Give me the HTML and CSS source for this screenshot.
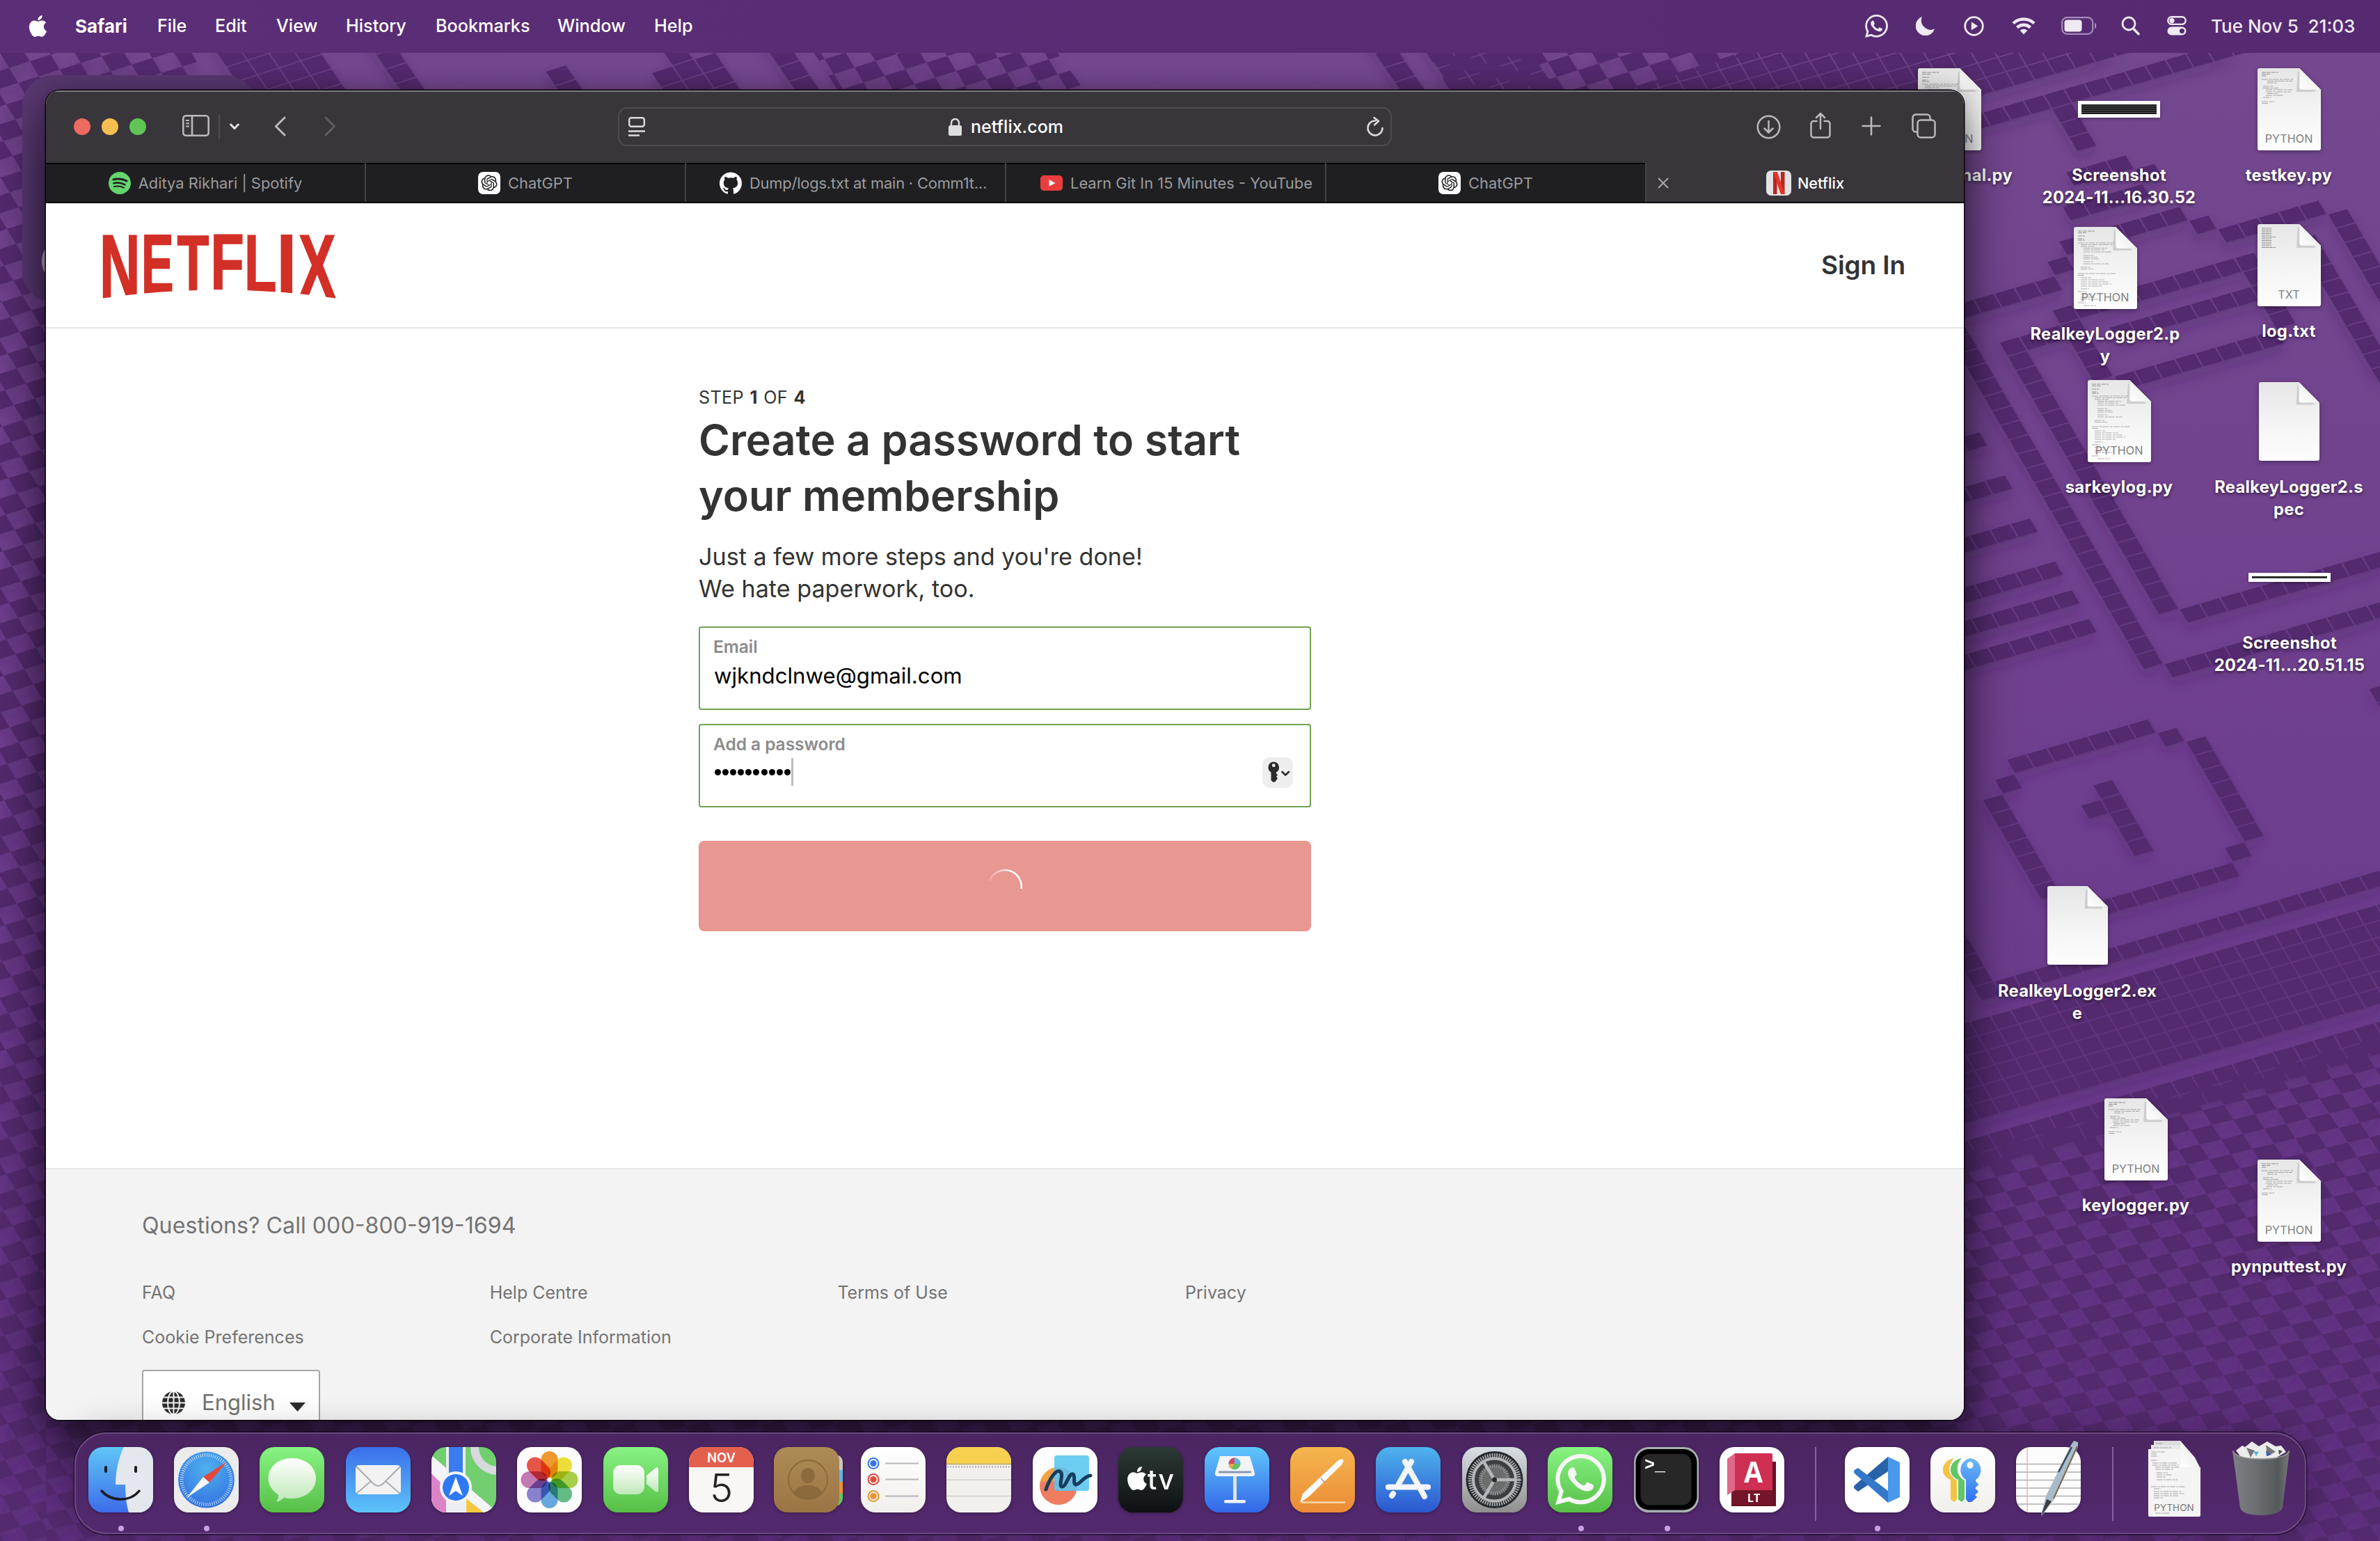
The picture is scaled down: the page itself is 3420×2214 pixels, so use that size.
FILE: index.html
```html
<!DOCTYPE html>
<html lang="en">
<head>
<meta charset="utf-8">
<title>Netflix</title>
<link rel="stylesheet" href="styles.css">
</head>
<body>

<!-- Shared symbols -->
<svg class="defs" width="0" height="0" aria-hidden="true">
  <defs>
    <linearGradient id="paper" x1="0" y1="0" x2="0" y2="1"><stop offset="0" stop-color="#e6e6e6"/><stop offset=".6" stop-color="#f6f6f6"/><stop offset="1" stop-color="#fdfdfd"/></linearGradient>
    <linearGradient id="fold" x1="0" y1="1" x2="1" y2="0"><stop offset="0" stop-color="#fff"/><stop offset=".5" stop-color="#f2f2f2"/><stop offset="1" stop-color="#c9c9c9"/></linearGradient>
    <linearGradient id="green" x1="0" y1="0" x2="0" y2="1"><stop offset="0" stop-color="#87f382"/><stop offset="1" stop-color="#57bf47"/></linearGradient>
    <linearGradient id="blue" x1="0" y1="0" x2="0" y2="1"><stop offset="0" stop-color="#3a6fea"/><stop offset="1" stop-color="#5cc4fa"/></linearGradient>
    <linearGradient id="blueDown" x1="0" y1="0" x2="0" y2="1"><stop offset="0" stop-color="#5fc6fb"/><stop offset="1" stop-color="#3366e8"/></linearGradient>
    <linearGradient id="white" x1="0" y1="0" x2="0" y2="1"><stop offset="0" stop-color="#fff"/><stop offset="1" stop-color="#f1efec"/></linearGradient>
    <linearGradient id="glass" x1="0" y1="0" x2="0" y2="1"><stop offset="0" stop-color="#fff"/><stop offset="1" stop-color="#bfe8b8"/></linearGradient>
    <clipPath id="tile93"><rect width="93" height="94" rx="21"/></clipPath>
  </defs>
  <symbol id="doc" viewBox="0 0 91 118">
    <path d="M3 0H60L91 31V115a3 3 0 0 1-3 3H3a3 3 0 0 1-3-3V3a3 3 0 0 1 3-3Z" fill="url(#paper)"/>
    <path d="M58 4L56 34H84Z" fill="#000" opacity=".13"/>
    <path d="M60 0L91 31H64a4 4 0 0 1-4-4Z" fill="url(#fold)" stroke="#d5d5d5" stroke-width=".6"/>
  </symbol>
  <symbol id="code-short" viewBox="0 0 91 118">
    <g stroke="#8f8f8f" stroke-width="1" fill="none"><path d="M6 6h24M6 8.500h12M6 11h6" stroke-dasharray="6 1"/><path d="M6 16h46M14 18.500h36M14 21h14M8 26h14M8 28.500h22M12 31h38M12 34h36M14 36.500h16M12 39h26M8 42h12M6 48h18M6 50.500h10" stroke-dasharray="9 1.500 4 1" opacity=".75"/></g>
  </symbol>
  <symbol id="code-long" viewBox="0 0 91 118">
    <g stroke="#8f8f8f" stroke-width="1" fill="none"><path d="M6 6h24M6 8.500h12M6 13h10M6 17h8M6 19h10" stroke-dasharray="6 1"/><path d="M6 23h52M10 25.500h46M10 28h20M14 30.500h34M14 33h30M14 36h40M14 41h14M14 43.500h20M14 46h22M14 50h14M14 53h36M10 58h14M10 60.500h18M6 67h54M6 69.500h10M10 73h16M10 76h34M10 79h40M10 82h44M10 85h30M10 89h12M6 93h12M10 97h16M10 101h20M10 104h26M6 109h12M14 113h18" stroke-dasharray="9 1.500 4 1" opacity=".7"/></g>
  </symbol>
  <symbol id="list-txt" viewBox="0 0 91 118">
    <path d="M6 6h14M6 8.500h14M6 11h14M6 13.500h14M6 16h14M6 18.500h20M6 21h14M6 23.500h14M6 26h14M6 28.500h14M6 31h14M6 33.500h20" stroke="#8f8f8f" stroke-width="1" stroke-dasharray="5 .6"/>
  </symbol>
  <symbol id="apple" viewBox="0 0 24 24">
    <path d="M12.152 6.896c-.948 0-2.415-1.078-3.96-1.04-2.04.027-3.91 1.183-4.961 3.014-2.117 3.675-.546 9.103 1.519 12.09 1.013 1.454 2.208 3.09 3.792 3.039 1.520-.065 2.090-.987 3.935-.987 1.831 0 2.350.987 3.960.948 1.637-.026 2.676-1.480 3.676-2.948 1.156-1.688 1.636-3.325 1.662-3.415-.039-.013-3.182-1.221-3.220-4.857-.026-3.040 2.480-4.494 2.597-4.559-1.429-2.090-3.623-2.324-4.390-2.376-2-.156-3.675 1.090-4.610 1.090zM15.530 3.830c.843-1.012 1.400-2.427 1.245-3.830-1.207.052-2.662.805-3.532 1.818-.780.896-1.454 2.338-1.273 3.714 1.338.104 2.715-.688 3.559-1.701"/>
  </symbol>
  <symbol id="whatsapp" viewBox="0 0 24 24">
    <path d="M17.472 14.382c-.297-.149-1.758-.867-2.030-.967-.273-.099-.471-.148-.670.150-.197.297-.767.966-.940 1.164-.173.199-.347.223-.644.075-.297-.150-1.255-.463-2.390-1.475-.883-.788-1.480-1.761-1.653-2.059-.173-.297-.018-.458.130-.606.134-.133.298-.347.446-.520.149-.174.198-.298.298-.497.099-.198.050-.371-.025-.520-.075-.149-.669-1.612-.916-2.207-.242-.579-.487-.500-.669-.510-.173-.008-.371-.010-.570-.010-.198 0-.520.074-.792.372-.272.297-1.040 1.016-1.040 2.479 0 1.462 1.065 2.875 1.213 3.074.149.198 2.096 3.200 5.077 4.487.709.306 1.262.489 1.694.625.712.227 1.360.195 1.871.118.571-.085 1.758-.719 2.006-1.413.248-.694.248-1.289.173-1.413-.074-.124-.272-.198-.570-.347m-5.421 7.403h-.004a9.870 9.870 0 0 1-5.031-1.378l-.361-.214-3.741.982.998-3.648-.235-.374a9.860 9.860 0 0 1-1.510-5.260c.001-5.450 4.436-9.884 9.888-9.884 2.640 0 5.122 1.030 6.988 2.898a9.825 9.825 0 0 1 2.893 6.994c-.003 5.450-4.437 9.884-9.885 9.884m8.413-18.297A11.815 11.815 0 0 0 12.050 0C5.495 0 .160 5.335.157 11.892c0 2.096.547 4.142 1.588 5.945L.057 24l6.305-1.654a11.882 11.882 0 0 0 5.683 1.448h.005c6.554 0 11.890-5.335 11.893-11.893a11.821 11.821 0 0 0-3.480-8.413z"/>
  </symbol>
  <symbol id="chatgpt" viewBox="0 0 32 32">
    <rect width="32" height="32" rx="7" fill="#fff"/>
    <path transform="translate(4.500 4.300) scale(.96)" fill="#1c1c1e" d="M22.2819 9.8211a5.9847 5.9847 0 0 0-.5157-4.9108 6.0462 6.0462 0 0 0-6.5098-2.9A6.0651 6.0651 0 0 0 4.9807 4.1818a5.9847 5.9847 0 0 0-3.9977 2.9 6.0462 6.0462 0 0 0 .7427 7.0966 5.98 5.98 0 0 0 .511 4.9107 6.051 6.051 0 0 0 6.5146 2.9001A5.9847 5.9847 0 0 0 13.2599 24a6.0557 6.0557 0 0 0 5.7718-4.2058 5.9894 5.9894 0 0 0 3.9977-2.9001 6.0557 6.0557 0 0 0-.7475-7.0729zm-9.022 12.6081a4.4755 4.4755 0 0 1-2.8764-1.0408l.1419-.0804 4.7783-2.7582a.7948.7948 0 0 0 .3927-.6813v-6.7369l2.02 1.1686a.071.071 0 0 1 .038.052v5.5826a4.504 4.504 0 0 1-4.4945 4.4944zm-9.6607-4.1254a4.4708 4.4708 0 0 1-.5346-3.0137l.142.0852 4.783 2.7582a.7712.7712 0 0 0 .7806 0l5.8428-3.3685v2.3324a.0804.0804 0 0 1-.0332.0615L9.74 19.9502a4.4992 4.4992 0 0 1-6.1408-1.6464zM2.3408 7.8956a4.485 4.485 0 0 1 2.3655-1.9728V11.6a.7664.7664 0 0 0 .3879.6765l5.8144 3.3543-2.0201 1.1685a.0757.0757 0 0 1-.071 0l-4.8303-2.7865A4.504 4.504 0 0 1 2.3408 7.872zm16.5963 3.8558L13.1038 8.364 15.1192 7.2a.0757.0757 0 0 1 .071 0l4.8303 2.7913a4.4944 4.4944 0 0 1-.6765 8.1042v-5.6772a.79.79 0 0 0-.407-.667zm2.0107-3.0231l-.142-.0852-4.7735-2.7818a.7759.7759 0 0 0-.7854 0L9.409 9.2297V6.8974a.0662.0662 0 0 1 .0284-.0615l4.8303-2.7866a4.4992 4.4992 0 0 1 6.6802 4.66zM8.3065 12.863l-2.02-1.1638a.0804.0804 0 0 1-.038-.0567V6.0742a4.4992 4.4992 0 0 1 7.3757-3.4537l-.142.0805L8.704 5.459a.7948.7948 0 0 0-.3927.6813zm1.0976-2.3654l2.602-1.4998 2.6069 1.4998v2.9994l-2.5974 1.4997-2.6067-1.4997Z"/>
  </symbol>
</svg>

<!-- Wallpaper -->
<svg class="wallpaper" width="3420" height="2214" viewBox="0 0 3420 2214" aria-hidden="true">
  <defs>
    <linearGradient id="sky" x1="0" y1="0" x2="0" y2="1"><stop offset="0" stop-color="#74498f"/><stop offset=".5" stop-color="#6f3f8f"/><stop offset="1" stop-color="#613383"/></linearGradient>
    <pattern id="unit" width="1" height="1" patternUnits="userSpaceOnUse"><rect width=".93" height=".93" fill="#53296e"/></pattern>
    <pattern id="checkR" width="2" height="2" patternUnits="userSpaceOnUse" patternTransform="matrix(31 -7.500 13.500 21 3132 875)"><path d="M0 0h1v1H0zM1 1h1v1H1z" fill="#53296e"/></pattern>
    <pattern id="checkL" width="2" height="2" patternUnits="userSpaceOnUse" patternTransform="matrix(30 -9.500 13 21.500 0 76)"><path d="M0 0h1v1H0zM1 1h1v1H1z" fill="#53296e"/></pattern>
    <filter id="lift" x="0" y="0" width="3420" height="2214" filterUnits="userSpaceOnUse"><feDropShadow dx="0" dy="10" stdDeviation="9" flood-color="#3f1a5c" flood-opacity=".3"/></filter>
    <clipPath id="farRight"><path d="M2500 76H3420V2214H2822V140H2300Z"/></clipPath>
  </defs>
  <rect width="3420" height="2214" fill="url(#sky)"/>
  <g filter="url(#lift)">
    <path d="M66 2040H2822V1655L3420 1490V2214H66Z" fill="url(#checkR)"/>
    <path d="M0 76H275L310 132H66V2214H0ZM1170 76H1520L1560 132H1205ZM2050 76H2520L2340 132H2085Z" fill="url(#checkL)"/>
    <g transform="matrix(31 -10 14.300 21 312 76)">
      <path d="M0 -1H4V14H0ZM6 -1H7V14H6ZM21 -1H22V30H21ZM44 10H45V40H44ZM46 10H50V40H46Z" fill="url(#unit)"/>
      <path d="M12 7h1v3h-1zM17 8h1v5h-1zM18 9h1v3h-1zM16 9h1v5h-1z" fill="url(#unit)"/>
    </g>
    <g clip-path="url(#farRight)">
      <g transform="matrix(29.200 -8.400 12.100 20.620 3132.500 875.500)" fill="url(#unit)">
        <path d="M-40 -56H40V-34H-40ZM0 -33H18V-32H0ZM7 -32H8V-29H7ZM6 -28H9V-27H6ZM5 -26H9V-25H5ZM9 -27H10V-26H9ZM4 -24H10V-23H4ZM10 -23H11V-22H10ZM11 -22H16V-21H11ZM16 -21H17V-4H16ZM3 -23H4V-22H3ZM-6 -22H3V-21H-6Z"/>
        <path d="M2 -20H12V-19H2ZM2 -19H3V-15H2ZM11 -19H12V-15H11ZM4 -18H11V-17H4ZM3 -15H11V-14H3ZM14 -20H15V-8H14ZM-1 -19H2V-18H-1ZM-1 -18H0V0H-1ZM0 0H14V1H0ZM-3 -22H-2V3H-3ZM-2 3H14V4H-2Z"/>
        <path d="M-14 -14H-4V-13H-14ZM-14 -11H-4V-10H-14ZM-14 -8H-4V-7H-14ZM-14 -5H-4V-4H-14ZM-16 -3H-4V-2H-16ZM-16 -1H-4V0H-16Z"/>
        <path d="M-11 6H-4V7H-11ZM-4 7H-3V8H-4ZM-3 8H-2V15H-3ZM-4 15H-3V16H-4ZM-11 16H-4V17H-11ZM-12 15H-11V16H-12ZM-13 8H-12V15H-13ZM-12 7H-11V8H-12Z"/>
        <path d="M-8 9H-7V14H-8ZM-9 10H-8V11H-9ZM6 8H7V14H6ZM-18 14H-17V20H-18ZM-17 19H10V20H-17ZM-24 21H12V27H-24ZM-24 28H12V30H-24Z"/>
      </g>
    </g>
  </g>
</svg>

<!-- Menu bar -->
<header class="menubar">
  <nav class="menus">
    <svg class="mb-apple" viewBox="1.500 0 21 24"><use href="#apple" width="24" height="24"/></svg>
    <span class="app">Safari</span><span>File</span><span>Edit</span><span>View</span><span>History</span><span>Bookmarks</span><span>Window</span><span>Help</span>
  </nav>
  <div class="status">
    <svg width="33" height="33" viewBox="0 0 24 24"><use href="#whatsapp"/></svg>
    <svg width="28" height="28" viewBox="0 0 28 28"><path d="M9 1A14 14 0 1 0 27 18.500 13.500 13.500 0 0 1 9 1Z"/></svg>
    <svg width="29" height="29" viewBox="0 0 29 29"><circle cx="14.500" cy="14.500" r="12.800" fill="none" stroke="#efe9f4" stroke-width="2.800"/><path d="M10.800 8.500v12l9.500-6z"/></svg>
    <svg width="34" height="26" viewBox="0 0 34 26"><g fill="none" stroke="#efe9f4" stroke-width="4.500"><path d="M2 9.500a21.500 21.500 0 0 1 30 0"/><path d="M7.500 15.500a14 14 0 0 1 19 0"/></g><path d="M17 25.500l-5.300-5.700a8 8 0 0 1 10.600 0z"/></svg>
    <svg width="52" height="26" viewBox="0 0 52 26"><rect x="1.200" y="1.200" width="44" height="23.600" rx="7" fill="none" stroke="#a58bba" stroke-width="2.200"/><rect x="4.500" y="4.500" width="25" height="17" rx="4"/><path d="M48 8.500c3 1 3 8 0 9z" fill="#a58bba"/></svg>
    <svg width="27" height="28" viewBox="0 0 27 28"><circle cx="11" cy="11" r="9" fill="none" stroke="#efe9f4" stroke-width="2.800"/><path d="M17.500 18l7.500 7.800" stroke="#efe9f4" stroke-width="3.400" stroke-linecap="round"/></svg>
    <svg width="28" height="28" viewBox="0 0 28 28"><rect x="1.300" y="1.300" width="25.400" height="10.600" rx="5.300" fill="none" stroke="#efe9f4" stroke-width="2.400"/><circle cx="7" cy="6.600" r="3.600"/><path d="M6.500 15.500h15a6 6 0 0 1 0 12h-15a6 6 0 0 1 0-12Zm15 2.600a3.500 3.500 0 1 0 0 7 3.500 3.500 0 0 0 0-7Z" fill-rule="evenodd"/></svg>
    <span class="clock">Tue Nov 5&nbsp; 21:03</span>
  </div>
</header>

<!-- Desktop -->
<main class="desktop">
  <div class="widget"><i class="widget-dial"></i><i class="widget-dot"></i></div>

  <div class="file edge" style="left:2711px;top:98px"><svg class="doc"><use href="#doc"/><use href="#code-long"/></svg><b class="kind">PYTHON</b><span class="name">nal.py</span></div>
  <div class="file" style="left:2945px;top:98px"><div class="shot shot-a"><i></i></div><span class="name">Screenshot<br>2024-11...16.30.52</span></div>
  <div class="file" style="left:3189px;top:98px"><svg class="doc"><use href="#doc"/><use href="#code-short"/></svg><b class="kind">PYTHON</b><span class="name">testkey.py</span></div>
  <div class="file" style="left:2925px;top:326px"><svg class="doc"><use href="#doc"/><use href="#code-long"/></svg><b class="kind">PYTHON</b><span class="name">RealkeyLogger2.p<br>y</span></div>
  <div class="file" style="left:3189px;top:322px"><svg class="doc"><use href="#doc"/><use href="#list-txt"/></svg><b class="kind">TXT</b><span class="name">log.txt</span></div>
  <div class="file" style="left:2945px;top:546px"><svg class="doc"><use href="#doc"/><use href="#code-long"/></svg><b class="kind">PYTHON</b><span class="name">sarkeylog.py</span></div>
  <div class="file" style="left:3189px;top:546px"><svg class="doc plain"><use href="#doc"/></svg><b class="kind"></b><span class="name">RealkeyLogger2.s<br>pec</span></div>
  <div class="file" style="left:3190px;top:770px"><div class="shot shot-b"><i></i></div><span class="name">Screenshot<br>2024-11...20.51.15</span></div>
  <div class="file" style="left:2885px;top:1270px"><svg class="doc plain"><use href="#doc"/></svg><b class="kind"></b><span class="name">RealkeyLogger2.ex<br>e</span></div>
  <div class="file" style="left:2969px;top:1578px"><svg class="doc"><use href="#doc"/><use href="#code-short"/></svg><b class="kind">PYTHON</b><span class="name">keylogger.py</span></div>
  <div class="file" style="left:3189px;top:1666px"><svg class="doc"><use href="#doc"/><use href="#code-short"/></svg><b class="kind">PYTHON</b><span class="name">pynputtest.py</span></div>

  <!-- Safari window -->
  <section class="window">
    <div class="toolbar">
      <i class="light red"></i><i class="light amber"></i><i class="light lime"></i>
      <svg class="t-side" width="39" height="31" viewBox="0 0 39 31"><g fill="none" stroke="#bbb9bd" stroke-width="2.600"><rect x="1.300" y="1.300" width="36.400" height="28.400" rx="4"/><path d="M14 1v29"/><path d="M5 8h5M5 12.300h5M5 16.600h5" stroke-width="2"/></g></svg>
      <i class="t-sep"></i>
      <svg class="t-chev" width="14" height="10" viewBox="0 0 14 10"><path d="M1.700 2l5.300 5.500L12.300 2" fill="none" stroke="#e6e5e7" stroke-width="3" stroke-linecap="round" stroke-linejoin="round"/></svg>
      <svg class="t-back" width="17" height="29" viewBox="0 0 17 29"><path d="M15 2L2.500 14.500 15 27" fill="none" stroke="#bbb9bd" stroke-width="3" stroke-linecap="round" stroke-linejoin="round"/></svg>
      <svg class="t-fwd" width="17" height="29" viewBox="0 0 17 29"><path d="M2 2l12.500 12.500L2 27" fill="none" stroke="#5f5d62" stroke-width="3" stroke-linecap="round" stroke-linejoin="round"/></svg>
      <div class="address">
        <svg width="24" height="28" viewBox="0 0 24 28"><g fill="none" stroke="#dddcde" stroke-width="2.400"><rect x="1.200" y="1.200" width="21.600" height="12.600" rx="3"/><path d="M0 20.500h24M0 26.500h16"/></g></svg>
        <div class="url"><svg width="19" height="26" viewBox="0 0 19 26"><rect y="11" width="19" height="15" rx="2.500" fill="#dddcde"/><path d="M4 12V7.500a5.500 5.500 0 0 1 11 0V12" fill="none" stroke="#dddcde" stroke-width="2.400"/></svg><span>netflix.com</span></div>
        <svg width="24" height="28" viewBox="0 0 24 28"><path d="M12.500 5.500A10.500 10.500 0 1 0 22.500 16" fill="none" stroke="#dddcde" stroke-width="2.500" stroke-linecap="round"/><path d="M10.500 1l6.500 5-6 5.500" fill="none" stroke="#dddcde" stroke-width="2.500" stroke-linecap="round" stroke-linejoin="round"/></svg>
      </div>
      <svg class="t-down" width="35" height="35" viewBox="0 0 35 35"><g fill="none" stroke="#bbb9bd" stroke-width="2.500" stroke-linecap="round" stroke-linejoin="round"><circle cx="17.500" cy="17.500" r="15.800"/><path d="M17.500 9v16M11.500 19.500l6 6 6-6"/></g></svg>
      <svg class="t-share" width="30" height="38" viewBox="0 0 30 38"><g fill="none" stroke="#bbb9bd" stroke-width="2.500" stroke-linecap="round" stroke-linejoin="round"><path d="M9.500 13H5a3.500 3.500 0 0 0-3.500 3.500V33A3.500 3.500 0 0 0 5 36.500h20a3.500 3.500 0 0 0 3.500-3.500V16.500A3.500 3.500 0 0 0 25 13h-4.500M15 24V2M9 8l6-6 6 6"/></g></svg>
      <svg class="t-plus" width="28" height="28" viewBox="0 0 28 28"><path d="M14 1.500v25M1.500 14h25" stroke="#bbb9bd" stroke-width="2.600" stroke-linecap="round"/></svg>
      <svg class="t-tabs" width="35" height="36" viewBox="0 0 35 36"><g fill="none" stroke="#bbb9bd" stroke-width="2.500"><rect x="8.500" y="9.500" width="25" height="25" rx="4.500"/><path d="M8 26.500H6A4.500 4.500 0 0 1 1.500 22V6A4.500 4.500 0 0 1 6 1.500h16A4.500 4.500 0 0 1 26.500 6v3"/></g></svg>
    </div>

    <div class="tabs">
      <div class="tab"><svg width="32" height="32" viewBox="0 0 32 32"><circle cx="16" cy="16" r="16" fill="#65d56e"/><g fill="none" stroke="#1f1f21" stroke-linecap="round"><path d="M7 11c6-1.600 13-1.200 19 2" stroke-width="3"/><path d="M7.500 16.300c5.500-1.400 11-.8 16 2" stroke-width="2.500"/><path d="M8 21c5-1.100 9.500-.7 14 1.800" stroke-width="2"/></g></svg><span>Aditya Rikhari | Spotify</span></div>
      <div class="tab"><svg width="32" height="32"><use href="#chatgpt"/></svg><span>ChatGPT</span></div>
      <div class="tab long tight"><svg width="32" height="32" viewBox="0 0 24 24"><path fill="#fff" d="M12 .297c-6.630 0-12 5.373-12 12 0 5.303 3.438 9.800 8.205 11.385.600.113.820-.258.820-.577 0-.285-.010-1.040-.015-2.040-3.338.724-4.042-1.610-4.042-1.610C4.422 18.070 3.633 17.700 3.633 17.700c-1.087-.744.084-.729.084-.729 1.205.084 1.838 1.236 1.838 1.236 1.070 1.835 2.809 1.305 3.495.998.108-.776.417-1.305.760-1.605-2.665-.300-5.466-1.332-5.466-5.930 0-1.310.465-2.380 1.235-3.220-.135-.303-.540-1.523.105-3.176 0 0 1.005-.322 3.300 1.230.960-.267 1.980-.399 3-.405 1.020.006 2.040.138 3 .405 2.280-1.552 3.285-1.230 3.285-1.230.645 1.653.240 2.873.120 3.176.765.840 1.230 1.910 1.230 3.220 0 4.610-2.805 5.625-5.475 5.920.420.360.810 1.096.810 2.220 0 1.606-.015 2.896-.015 3.286 0 .315.210.690.825.570C20.565 22.092 24 17.592 24 12.297c0-6.627-5.373-12-12-12"/></svg><span>Dump/logs.txt at main · Comm1t...</span></div>
      <div class="tab long"><svg width="32" height="32" viewBox="0 0 32 32"><rect y="5" width="32" height="22" rx="5" fill="#ea3d3d"/><path d="M12.500 11v10l9-5z" fill="#fff"/></svg><span>Learn Git In 15 Minutes - YouTube</span></div>
      <div class="tab"><svg width="32" height="32"><use href="#chatgpt"/></svg><span>ChatGPT</span></div>
      <div class="tab active">
        <svg class="close" width="16" height="16" viewBox="0 0 16 16"><path d="M1.500 1.500l13 13M14.500 1.500l-13 13" stroke="#a9a7ab" stroke-width="2" stroke-linecap="round"/></svg>
        <svg width="36" height="36" viewBox="0 0 36 36"><rect width="36" height="36" rx="7" fill="#e3e3e3"/><rect x="10" y="2" width="5.500" height="32" fill="#b5271e"/><rect x="21" y="2" width="5.500" height="32" fill="#b5271e"/><rect x="10" y="2" width="6" height="32" fill="#e0372b" transform="matrix(1 0 .34 1 -.7 0)"/></svg><span>Netflix</span>
      </div>
    </div>

    <div class="page">
      <div class="page-head">
        <svg class="logo" width="334" height="90" viewBox="0 0 334 90" role="img" aria-label="Netflix">
          <g font-family="'Liberation Sans', Arial, sans-serif" font-weight="700" font-size="100" fill="#d22f26" stroke="#d22f26" stroke-width="1.500">
            <text transform="matrix(.81 0 0 1.300 -5 90)">N</text>
            <text transform="matrix(.70 0 0 1.200 55 83)">E</text>
            <text transform="matrix(.75 0 0 1.150 106.500 79.500)">T</text>
            <text transform="matrix(.79 0 0 1.130 154.500 78)">F</text>
            <text transform="matrix(.76 0 0 1.170 203 81)">L</text>
            <text transform="matrix(1.030 0 0 1.200 249.500 83)">I</text>
            <text transform="matrix(.80 0 0 1.300 281 90)">X</text>
          </g>
          <path d="M-4 91Q167 66 338 91V98H-4Z" fill="#fff"/>
        </svg>
        <a class="signin">Sign In</a>
      </div>

      <form class="signup">
        <p class="step">STEP <b>1</b> OF <b>4</b></p>
        <h1>Create a password to start<br>your membership</h1>
        <p class="lead">Just a few more steps and you're done!<br>We hate paperwork, too.</p>
        <div class="field"><label>Email</label><span class="value">wjkndclnwe@gmail.com</span></div>
        <div class="field">
          <label>Add a password</label>
          <div class="secret"><i></i><i></i><i></i><i></i><i></i><i></i><i></i><i></i><i></i><i></i><u></u></div>
          <span class="keybtn"><svg width="44" height="44" viewBox="0 0 44 44"><path fill-rule="evenodd" d="M16 6.500a8 8 0 0 1 4 14.900v2.200l2 2-2 2.200 2 2.400-3.800 5.300h-3.200l-2.500-2.600V21.400A8 8 0 0 1 16 6.500Zm.2 2.800a2.400 2.400 0 1 0 0 4.800 2.400 2.400 0 0 0 0-4.800Z" fill="#2b2b2b"/><path d="M28.500 21l4.700 4.500 4.700-4.500" fill="none" stroke="#2b2b2b" stroke-width="2.600" stroke-linecap="round" stroke-linejoin="round"/></svg></span>
        </div>
        <div class="submit">
          <svg width="50" height="50" viewBox="0 0 50 50"><defs><linearGradient id="spin" x1="0" x2="1"><stop offset="0" stop-color="#fff" stop-opacity=".15"/><stop offset=".7" stop-color="#fff"/></linearGradient></defs><path d="M3 18A23.500 23.500 0 0 1 48.500 29" fill="none" stroke="url(#spin)" stroke-width="2.600"/></svg>
        </div>
      </form>

      <footer class="foot">
        <p class="call">Questions? Call 000-800-919-1694</p>
        <div class="links"><a>FAQ</a><a>Help Centre</a><a>Terms of Use</a><a>Privacy</a><a>Cookie Preferences</a><a>Corporate Information</a></div>
        <div class="lang">
          <svg width="33" height="33" viewBox="0 0 33 33"><circle cx="16.500" cy="16.500" r="16.500" fill="#2b2b2b"/><g fill="none" stroke="#f6f6f6" stroke-width="2"><ellipse cx="16.500" cy="16.500" rx="8.500" ry="16.500"/><path d="M16.500 0v33M0 16.500h33M2 8.500h29M2 24.500h29"/></g></svg>
          <span>English</span>
          <svg class="caret" width="23" height="13" viewBox="0 0 23 13"><path d="M0 0h23L11.500 13z" fill="#2b2b2b"/></svg>
        </div>
      </footer>
    </div>
  </section>
</main>

<!-- Dock -->
<div class="dock">
  <svg class="app-icon on" viewBox="0 0 93 94"><g clip-path="url(#tile93)"><rect width="93" height="94" fill="url(#finderL)"/><path d="M51 0C43 16 39 36 39 54H53C53 70 55 84 58 94H93V0Z" fill="#e4e8ee"/></g><defs><linearGradient id="finderL" x1="0" y1="0" x2="0" y2="1"><stop offset="0" stop-color="#5fc6f7"/><stop offset="1" stop-color="#3c6ce9"/></linearGradient></defs><g fill="none" stroke="#1d1d1f" stroke-width="4" stroke-linecap="round"><path d="M25 29v6M68 29v6"/><path d="M19 63C33 79 60 79 73 63" stroke-width="3.500"/></g></svg>
  <svg class="app-icon on" viewBox="0 0 93 94"><rect width="93" height="94" rx="21" fill="#ececec"/><circle cx="46.500" cy="47" r="40.500" fill="url(#saf)"/><defs><radialGradient id="saf" cx=".5" cy=".3" r=".8"><stop offset="0" stop-color="#4fb0ee"/><stop offset="1" stop-color="#2f6be0"/></radialGradient></defs><circle cx="46.500" cy="47" r="35.500" fill="none" stroke="#e6f1fb" stroke-width="5" stroke-dasharray="1 2.100" opacity=".85"/><path d="M76 21L51 51 42 43Z" fill="#e8483c"/><path d="M18 73L42 43 51 51Z" fill="#f4f6f8"/></svg>
  <svg class="app-icon" viewBox="0 0 93 94"><rect width="93" height="94" rx="21" fill="url(#green)"/><path d="M46.500 16C66 16 81 28.500 81 45S66 74 46.500 74c-4 0-8-.6-11.500-1.600C32 76 28 78 24 78.500c2.500-3 3.500-7 3-10C18 63 12.500 54 12.500 45 12.500 28.500 27 16 46.500 16Z" fill="url(#glass)"/></svg>
  <svg class="app-icon" viewBox="0 0 93 94"><rect width="93" height="94" rx="21" fill="url(#blue)"/><rect x="14" y="26" width="65" height="42" rx="5" fill="#f2f2f3"/><g fill="none" stroke="#a9adb3" stroke-width="2"><path d="M15 28L40 53q6.500 6 13 0L78 28"/><path d="M15 67L36 49M78 67L57 49"/></g></svg>
  <svg class="app-icon" viewBox="0 0 93 94"><g clip-path="url(#tile93)"><rect width="93" height="94" fill="#72cf70"/><path d="M0 12L93 92V94H0Z" fill="#f4f4f6"/><path d="M0 38L22 60V94H0Z" fill="#dc83c8"/><path d="M50 94V74L75 94Z" fill="#f3c83f"/><path d="M62 0a34 34 0 0 0 31 34" fill="none" stroke="#d7d9de" stroke-width="12"/><rect x="21" width="28" height="94" fill="#eceef2"/><rect x="25" width="20" height="60" fill="#3b7bf0"/></g><circle cx="35" cy="58" r="23" fill="#f4f4f8"/><circle cx="35" cy="58" r="19" fill="#2f78f3"/><path d="M35 43l10 27-10-7-10 7z" fill="#fff"/></svg>
  <svg class="app-icon" viewBox="0 0 93 94"><rect width="93" height="94" rx="21" fill="#fcfcfc"/><g class="petals"><g transform="translate(46.500 47)"><rect x="-12" y="-41" width="24" height="38" rx="12" fill="#f29a2e"/><rect x="-12" y="-41" width="24" height="38" rx="12" fill="#efe03a" transform="rotate(45)"/><rect x="-12" y="-41" width="24" height="38" rx="12" fill="#a9d04a" transform="rotate(90)"/><rect x="-12" y="-41" width="24" height="38" rx="12" fill="#63bd86" transform="rotate(135)"/><rect x="-12" y="-41" width="24" height="38" rx="12" fill="#69a9e0" transform="rotate(180)"/><rect x="-12" y="-41" width="24" height="38" rx="12" fill="#8a83cf" transform="rotate(225)"/><rect x="-12" y="-41" width="24" height="38" rx="12" fill="#c67bb4" transform="rotate(270)"/><rect x="-12" y="-41" width="24" height="38" rx="12" fill="#ea5649" transform="rotate(315)"/></g></g></svg>
  <svg class="app-icon" viewBox="0 0 93 94"><rect width="93" height="94" rx="21" fill="url(#green)"/><rect x="14" y="26" width="45" height="42" rx="11" fill="url(#glass)"/><path d="M62 41L75 30q4-2 4 2v30q0 4-4 2L62 53Z" fill="url(#glass)"/></svg>
  <svg class="app-icon" viewBox="0 0 93 94"><g clip-path="url(#tile93)"><rect width="93" height="94" fill="#f8f7f5"/><rect width="93" height="29" fill="#e3604f"/></g><text x="46.500" y="22" text-anchor="middle" font-family="Inter, sans-serif" font-weight="600" font-size="18.500" fill="#fff">NOV</text><text x="46.500" y="79" text-anchor="middle" font-family="Inter, sans-serif" font-weight="300" font-size="56" fill="#232323">5</text></svg>
  <svg class="app-icon" viewBox="0 0 93 94"><path d="M85 12h6q6 3 6 10v12H85z" fill="#c9c6c0"/><path d="M85 33h12v17H85z" fill="#62b6ea"/><path d="M85 50h12v17H85z" fill="#f0902f"/><path d="M85 67h12v8q-2 6-6 9h-6z" fill="#63c666"/><rect x="-2" width="94" height="94" rx="20" fill="url(#tan)"/><defs><linearGradient id="tan" x1="0" y1="0" x2="0" y2="1"><stop offset="0" stop-color="#ad8b56"/><stop offset="1" stop-color="#9c7444"/></linearGradient></defs><g fill="#8c6a3c"><circle cx="47" cy="47" r="28" fill="none" stroke="#8c6a3c" stroke-width="2"/><ellipse cx="47" cy="41" rx="10" ry="11"/><path d="M26 66a22 16 0 0 1 42 0 28 28 0 0 1-42 0Z"/></g></svg>
  <svg class="app-icon" viewBox="0 0 93 94"><rect width="93" height="94" rx="21" fill="url(#white)"/><path d="M35 23.500h48M35 46.500h48M35 70.500h48" stroke="#b4b6b8" stroke-width="2"/><g fill="none" stroke-width="2"><circle cx="18" cy="23.500" r="7.500" stroke="#3476f0"/><circle cx="18" cy="46.500" r="7.500" stroke="#e6483b"/><circle cx="18" cy="70.500" r="7.500" stroke="#e8942f"/></g><circle cx="18" cy="23.500" r="4.600" fill="#3476f0"/><circle cx="18" cy="46.500" r="4.600" fill="#e6483b"/><circle cx="18" cy="70.500" r="4.600" fill="#e8942f"/></svg>
  <svg class="app-icon" viewBox="0 0 93 94"><g clip-path="url(#tile93)"><rect width="93" height="94" fill="#f1f0ed"/><rect width="93" height="24" fill="#f7d04f"/><path d="M0 24.500h93" stroke="#b9a56a" stroke-width="1.500"/><path d="M1 28.500h93" stroke="#a9a8a5" stroke-width="2" stroke-dasharray="2 2"/><path d="M0 47h93M0 70.500h93" stroke="#d0cfcc" stroke-width="1.600"/></g></svg>
  <svg class="app-icon" viewBox="0 0 93 94"><rect width="93" height="94" rx="21" fill="#fdfdfd"/><circle cx="37" cy="56" r="27" fill="#ee7d60"/><path d="M11 50a27 27 0 0 1 26-21v20Z" fill="#f2a343"/><rect x="31" y="12" width="50" height="51" rx="4" fill="#59c5f0" opacity=".88"/><path d="M19 61C24 46 33 32 39 35c7 4-3 20 3 22 6 1 10-21 16-18 4 3-1 14 4 15 6 0 11-12 21-13" fill="none" stroke="#163c5e" stroke-width="5" stroke-linecap="round" stroke-linejoin="round"/></svg>
  <svg class="app-icon" viewBox="0 0 93 94"><rect width="93" height="94" rx="21" fill="url(#tvbg)"/><defs><linearGradient id="tvbg" x1="0" y1="0" x2="0" y2="1"><stop offset="0" stop-color="#2c3a35"/><stop offset="1" stop-color="#0e1012"/></linearGradient></defs><use href="#apple" x="10" y="28" width="34" height="34" fill="#fff"/><text x="42" y="61" font-family="Inter, sans-serif" font-weight="500" font-size="39" fill="#fff" textLength="38">tv</text></svg>
  <svg class="app-icon" viewBox="0 0 93 94"><rect width="93" height="94" rx="21" fill="url(#blueDown)"/><path d="M22 13h43l7 24q.5 5-4 5H19q-4.500 0-4-5Z" fill="#f2f4f6"/><path d="M20 36h47" stroke="#8a9aae" stroke-width="3"/><circle cx="43" cy="24" r="8.500" fill="#63bd6a"/><path d="M43 24V15.500a8.500 8.500 0 0 1 8.500 8.500Z" fill="#5eb5ea"/><path d="M43 24V15.500A8.500 8.500 0 0 0 34.500 24Z" fill="#d2486c"/><path d="M43 24h-8.500a8.500 8.500 0 0 0 4 7.200Z" fill="#f0a53c"/><rect x="41" y="42" width="5" height="35" fill="#dfe3e8"/><rect x="28" y="76" width="31" height="4.500" rx="2" fill="#f2f4f6"/></svg>
  <svg class="app-icon" viewBox="0 0 93 94"><rect width="93" height="94" rx="21" fill="url(#pg)"/><defs><linearGradient id="pg" x1="0" y1="0" x2="0" y2="1"><stop offset="0" stop-color="#f5b64d"/><stop offset="1" stop-color="#ec8b37"/></linearGradient></defs><path d="M16 79.500h63" stroke="#fbd9a8" stroke-width="2.500"/><path d="M14 80l4-13L67 21q6-5 8.500-3.500t-1.500 8L27 71Z" fill="#fafafa"/><path d="M44 45l6 6" stroke="#999" stroke-width="1.500"/></svg>
  <svg class="app-icon" viewBox="0 0 93 94"><rect width="93" height="94" rx="21" fill="url(#as)"/><defs><linearGradient id="as" x1="0" y1="0" x2="0" y2="1"><stop offset="0" stop-color="#4fb3ee"/><stop offset="1" stop-color="#2b57cf"/></linearGradient></defs><g stroke="#f3f6fa" stroke-width="8" stroke-linecap="round"><path d="M18 57.500h57"/><path d="M51 21L33 53M23 70l2-3"/><path d="M42 21L70 71"/></g></svg>
  <svg class="app-icon" viewBox="0 0 93 94"><rect width="93" height="94" rx="21" fill="url(#set)"/><defs><linearGradient id="set" x1="0" y1="0" x2="0" y2="1"><stop offset="0" stop-color="#d8dfe5"/><stop offset="1" stop-color="#908f8f"/></linearGradient></defs><circle cx="46.500" cy="47" r="41" fill="#26292b"/><circle cx="46.500" cy="47" r="34.500" fill="none" stroke="#a9adb0" stroke-width="7" stroke-dasharray="1.800 1.500"/><circle cx="46.500" cy="47" r="30.500" fill="#3c3f41" stroke="#b3b7ba" stroke-width="4"/><circle cx="46.500" cy="47" r="20" fill="#6b6c6c" stroke="#8d9092" stroke-width="5" stroke-dasharray="2 1.200"/><path d="M46.500 47H77M46.500 47L31 21M46.500 47L31 73" stroke="#b3b7ba" stroke-width="4.500"/><circle cx="46.500" cy="47" r="3.500" fill="#2b2b2b"/></svg>
  <svg class="app-icon on" viewBox="0 0 93 94"><rect width="93" height="94" rx="21" fill="url(#green)"/><use href="#whatsapp" x="11" y="10" width="73" height="73" fill="#f6f6f6"/></svg>
  <svg class="app-icon on" viewBox="0 0 93 94"><rect width="93" height="94" rx="21" fill="#a9aeb2"/><rect x="2.500" y="3" width="88" height="87.500" rx="19" fill="#000"/><rect x="9.500" y="10" width="73" height="73.500" rx="13" fill="#272728"/><text x="15" y="33" font-family="'Liberation Mono', monospace" font-weight="700" font-size="25" fill="#fff">&gt;_</text></svg>
  <svg class="app-icon" viewBox="0 0 93 94"><rect width="93" height="94" rx="21" fill="#fff"/><path d="M76 21h5v64H17V66z" fill="#6b1226"/><rect x="17" y="62" width="59" height="21" fill="#741529"/><path d="M11 17L22 9V62L11 69Z" fill="#e0688a"/><path d="M22 9H74q2 0 2 2V62H22Z" fill="#cf2f52"/><text x="48.500" y="51" text-anchor="middle" font-family="'Open Sans', sans-serif" font-weight="700" font-size="42" fill="#fff" textLength="27" lengthAdjust="spacingAndGlyphs">A</text><text x="49" y="79" text-anchor="middle" font-family="'Open Sans', sans-serif" font-weight="700" font-size="16" fill="#fff">LT</text></svg>
  <i class="dock-sep"></i>
  <svg class="app-icon on first" viewBox="0 0 93 94"><rect width="93" height="94" rx="21" fill="#fff"/><path d="M19 64l-5-4q-2-3 0-5L62 14v21Z" fill="#2862a8"/><path d="M14 38q-2-3 0-5l5-3 43 33v17Z" fill="#3478c9"/><path d="M62 14l17 8V72l-17 8Z" fill="#4a98ea"/></svg>
  <svg class="app-icon" viewBox="0 0 93 94"><rect width="93" height="94" rx="21" fill="url(#white)"/><g stroke="none"><path d="M34 16C14 20 13 41 29 47V75l5 4 4-4V48C23 40 26 24 34 16Z" fill="#f2c445"/><path d="M45 16C25 20 24 41 40 47V75l5 4 4-4V48C35 40 37 24 45 16Z" fill="#62c765"/><path fill-rule="evenodd" d="M57 16a17 17 0 0 1 8 31v2l4 5-5 5 5 5-5 5 3 3-8 7h-5l-3-4V47A17 17 0 0 1 57 16Zm0 5a4.500 5 0 1 0 0 10 4.500 5 0 0 0 0-10Z" fill="url(#keyb)"/></g><defs><linearGradient id="keyb" x1="0" y1="0" x2="0" y2="1"><stop offset="0" stop-color="#6bb9f4"/><stop offset="1" stop-color="#2f6ff5"/></linearGradient></defs></svg>
  <svg class="app-icon" viewBox="0 0 93 94"><rect width="93" height="94" rx="21" fill="#fcfcfc"/><path d="M0 24.500h93M0 36h93M0 47.500h93M0 59h93M0 70.500h93M3 82h87" stroke="#aeaeae" stroke-width="1.600"/><path d="M16 2v90" stroke="#f0b0ae" stroke-width="1.400"/><path d="M83 -9l6 2v7L54 76 37 99l-1-2L43 70 79 -3Z" fill="#a9bccc"/><path d="M80 0L61 36" stroke="#34485a" stroke-width="2.500"/><path d="M88 -1L54 74" stroke="#7d6a50" stroke-width="2"/><path d="M44 75l7 3-15 21z" fill="#3b3f44"/></svg>
  <i class="dock-sep"></i>
  <svg class="stack" viewBox="0 0 75 110"><path d="M8 0H46L66 38H8Z" fill="#dcdcdc"/><path d="M4 6H46L70 38H4Z" fill="#e8e8e8"/><path d="M0 12H46L48 38H75V107q0 2-2 2H2q-2 0-2-2Z" fill="#f4f4f4"/><path d="M46 0L67 24 74 38H50q-3 0-3-3Z" fill="url(#fold)"/><path d="M11 4h10M7 10h26M4 16h20M4 19h8M4 22h10M4 28h10M6 32h36M6 35h38M10 38h34M10 41h26M12 46h16M12 49h22M12 52h14M12 56h30M4 66h50M8 69h10M8 73h40M8 76h44M8 79h36M8 82h14M10 104h20" stroke="#8f8f8f" stroke-width="1" stroke-dasharray="8 1.500 3 1" opacity=".8"/><text x="37" y="101" text-anchor="middle" font-family="Inter, sans-serif" font-size="13.500" fill="#777">PYTHON</text></svg>
  <svg class="trash" viewBox="0 0 82 108"><path d="M5 14L14 7 18 9 28 1 38 8 50 1 62 8 70 7 77 16 60 26H14Z" fill="#ececec"/><path d="M20 10l12 4-6 10zM48 6l14 10-12 6z" fill="#777"/><path d="M30 15l8 1-4 6z" fill="#59b8d8"/><path d="M48 14l8 6-7 2z" fill="#3c5fa8"/><path d="M66 13l6 2-5 5z" fill="#4a4a4c"/><path d="M0 14Q5 26 41 26T82 14L72 96Q68 107 41 107T11 96Z" fill="url(#bin)"/><path d="M0 14Q5 26 41 26T82 14" fill="none" stroke="#97999b" stroke-width="1.500"/><defs><linearGradient id="bin" x1="0" y1="0" x2="1" y2="0"><stop offset="0" stop-color="#7e8183"/><stop offset=".45" stop-color="#6a6d6f"/><stop offset=".8" stop-color="#55585a"/><stop offset="1" stop-color="#77797b"/></linearGradient></defs></svg>
  <div class="dots"><i style="left:61px"></i><i style="left:184px"></i><i style="left:2159px"></i><i style="left:2283px"></i><i style="left:2585px"></i></div>
</div>

</body>
</html>
```
FILE: styles.css
```css
* { box-sizing: border-box; }
body {
  margin: 0;
  width: 3420px;
  height: 2214px;
  overflow: hidden;
  position: relative;
  background: #6d3d8d;
  font-family: Inter, "Liberation Sans", sans-serif;
}
p, h1 { margin: 0; font-weight: 400; }
i, u { display: block; text-decoration: none; }
svg { display: block; flex: none; }
.defs { position: absolute; }
.wallpaper { position: absolute; left: 0; top: 0; }

/* Menu bar */
.menubar {
  position: relative;
  height: 76px;
  display: flex;
  justify-content: space-between;
  align-items: center;
  padding: 0 33px 2px 41px;
  background: linear-gradient(90deg, #5b2f78, #552a70);
  color: #fff;
  font-size: 25.200px;
  font-weight: 500;
}
.menus {
  display: grid;
  grid-template-columns: 67px 118px 83px 88px 100px 129px 175px 139px auto;
  align-items: center;
}
.mb-apple { width: 27px; height: 31px; fill: #fff; }
.app { font-size: 26px; font-weight: 700; }
.status {
  display: grid;
  grid-template-columns: 73px 69px 69px 71px 86px 66px 65px 208px;
  align-items: center;
  fill: #efe9f4;
  color: #efe9f4;
}
.clock { font-size: 26px; margin-left: -2px; white-space: nowrap; }

/* Desktop files sit on a free canvas */
.widget {
  position: absolute;
  left: 32px;
  top: 108px;
  width: 336px;
  height: 326px;
  border-radius: 44px;
  background: #593871;
  overflow: hidden;
}
.widget-dial { position: absolute; left: 24px; top: 30px; width: 140px; height: 140px; border-radius: 50%; background: #5d3a7c; }
.widget-dot { position: absolute; left: 28px; top: 233px; width: 68px; height: 68px; border-radius: 50%; background: #c3b1cb; }
.file {
  position: absolute;
  width: 200px;
  display: flex;
  flex-direction: column;
  align-items: center;
  color: #fff;
}
.doc { width: 91px; height: 118px; filter: drop-shadow(0 2px 3px rgba(0, 0, 0, .35)); }
.doc.plain { width: 87px; height: 113px; margin: 3px 0 2px; }
.kind {
  height: 20px;
  margin-top: -27px;
  margin-bottom: 7px;
  position: relative;
  font-size: 16.200px;
  line-height: 20px;
  font-weight: 400;
  color: #808080;
}
.name {
  margin-top: 20px;
  font-size: 23.700px;
  line-height: 32px;
  font-weight: 700;
  letter-spacing: .3px;
  text-align: center;
  white-space: nowrap;
  text-shadow: 0 2px 4px rgba(0, 0, 0, .6);
}
.file.edge .doc { margin-left: -20px; }
.file.edge .kind { margin-left: -20px; }
.file.edge .name { align-self: flex-end; margin-right: 19px; }
.shot { background: #fff; box-shadow: 0 2px 4px rgba(0, 0, 0, .3); }
.shot-a { width: 118px; height: 24px; margin: 47px 0; padding: 5px; }
.shot-b { width: 118px; height: 13px; margin: 53px 0 52px; padding: 5px; }
.shot i { height: 100%; background: repeating-linear-gradient(#1f1f20 0 2px, #4b4b4c 2px 3px); }

/* Safari window */
.window {
  position: absolute;
  left: 66px;
  top: 130px;
  width: 2756px;
  height: 1910px;
  border-radius: 20px;
  overflow: hidden;
  background: #fff;
  box-shadow: 0 0 0 1.500px #09040d, 0 36px 70px 4px rgba(0, 0, 0, .62), 0 0 30px rgba(0, 0, 0, .2);
}
.toolbar {
  height: 104px;
  display: flex;
  align-items: center;
  padding-left: 40px;
  background: #39363b;
  box-shadow: inset 0 2px 0 #7c7a7e;
}
.light { width: 24px; height: 24px; margin-right: 16px; border-radius: 50%; }
.red { background: #ec6a5f; }
.amber { background: #f4bf50; }
.lime { background: #61c555; }
.t-side { margin-left: 36px; margin-top: -3px; }
.t-sep { width: 2px; height: 36px; margin-left: 13px; background: #4d4b50; }
.t-chev { margin-left: 14px; }
.t-back { margin-left: 50px; margin-top: -2px; }
.t-fwd { margin-left: 55px; margin-top: -2px; }
.address {
  width: 1112px;
  height: 56px;
  margin-left: 405px;
  padding: 0 10px 0 13px;
  display: flex;
  align-items: center;
  justify-content: space-between;
  border: 2px solid #4d4b50;
  border-radius: 13px;
}
.url { display: flex; align-items: center; gap: 13px; color: #fff; font-size: 25px; font-weight: 500; }
.t-down { margin-left: 524px; }
.t-share { margin-left: 42px; margin-top: -4px; }
.t-plus { margin-left: 44px; margin-top: -3px; }
.t-tabs { margin-left: 44px; margin-top: -3px; }

.tabs { height: 58px; display: flex; background: #1f1f21; border-bottom: 2px solid #000; }
.tab {
  width: 460px;
  padding-top: 2px;
  display: flex;
  align-items: center;
  justify-content: center;
  gap: 11px;
  border-right: 2px solid #454347;
  box-shadow: inset 0 2px 0 #000;
  color: #9c9b9e;
  font-size: 21.900px;
  white-space: nowrap;
}
.tab.long { justify-content: flex-start; padding-left: 49px; }
.tab.tight { padding-left: 48px; letter-spacing: -.2px; }
.tab.active {
  position: relative;
  flex: 1;
  gap: 9px;
  border: 0;
  background: #39363b;
  box-shadow: none;
  color: #fff;
  font-weight: 500;
  font-size: 21.700px;
}
.close { position: absolute; left: 16px; top: 21px; }

/* Sign-up page */
.page { height: 1748px; display: flex; flex-direction: column; color: #333; }
.page-head {
  height: 180px;
  flex: none;
  display: flex;
  justify-content: space-between;
  align-items: center;
  padding: 0 84px 0 82px;
  border-bottom: 2px solid #e6e6e6;
}
.logo { margin-top: 4px; overflow: visible; }
.signin { margin-top: -2px; font-size: 37px; font-weight: 600; letter-spacing: -.1px; }
.signup { width: 880px; margin: 0 auto; padding-top: 84px; flex: 1; }
.step { font-size: 25.200px; line-height: 30px; letter-spacing: .35px; word-spacing: 1px; }
.step b { font-weight: 700; }
h1 { margin-top: 6px; font-size: 61.050px; line-height: 80px; font-weight: 600; white-space: nowrap; }
.lead { margin-top: 24.500px; font-size: 34.160px; line-height: 46px; white-space: nowrap; }
.field {
  position: relative;
  height: 120px;
  margin-top: 20px;
  padding: 12px 0 0 19px;
  border: 2px solid #6fa352;
  border-radius: 4px;
}
.lead + .field { margin-top: 31.500px; }
.field label { display: block; font-size: 24.500px; line-height: 30px; font-weight: 600; letter-spacing: -.05px; color: #8c8c8c; }
.value { display: block; margin: 8px 0 0 1px; font-size: 31.200px; line-height: 38px; color: #000; }
.secret { display: flex; align-items: center; height: 40px; margin: 5px 0 0 2px; gap: 2.100px; }
.secret i { width: 9px; height: 9px; border-radius: 50%; background: #000; }
.secret u { width: 3px; height: 40px; margin-left: -1px; background: #bcbcbc; }
.keybtn { position: absolute; right: 24px; top: 46px; width: 44px; height: 44px; border-radius: 10px; background: #eee; }
.submit {
  height: 130px;
  margin-top: 48px;
  border-radius: 8px;
  display: flex;
  align-items: center;
  justify-content: center;
  background: #e89791;
}
.foot {
  height: 362px;
  flex: none;
  overflow: hidden;
  padding: 61px 0 0 138px;
  border-top: 2px solid #e6e6e6;
  background: #f3f3f3;
  color: #737373;
}
.call { font-size: 32.200px; line-height: 40px; }
.links { display: grid; grid-template-columns: repeat(4, 499.700px); row-gap: 32px; margin-top: 60px; font-size: 25px; line-height: 32px; }
.lang {
  width: 256px;
  height: 100px;
  margin-top: 31px;
  padding: 27px 0 0 27px;
  display: flex;
  align-items: flex-start;
  border: 2px solid #a6a6a6;
  border-radius: 4px;
  background: #fff;
  font-size: 31px;
  line-height: 36px;
}
.lang svg { margin-top: 2px; }
.lang span { margin-left: 24px; }
.lang .caret { margin: 18px 0 0 20px; }

/* Dock */
.dock {
  position: absolute;
  left: 107px;
  top: 2058px;
  width: 3207px;
  height: 146px;
  padding: 19px 0 0 17.500px;
  display: flex;
  align-items: flex-start;
  gap: 30.400px;
  border: 2px solid #6d4984;
  border-radius: 46px;
  background: linear-gradient(#4b2662, #53296e);
  box-shadow: 0 0 0 1.500px rgba(20, 6, 30, .7), 0 0 50px 6px rgba(0, 0, 0, .22);
}
.app-icon { width: 93px; height: 94px; overflow: visible; filter: drop-shadow(0 1px 2px rgba(0, 0, 0, .35)); }
.app-icon.first { margin-left: 10px; }
.petals g rect { mix-blend-mode: multiply; }
.dock-sep { flex: none; width: 2px; height: 106px; margin-left: 14px; background: #8560a3; }
.stack { width: 75px; height: 110px; margin: -9px 0 0 20px; }
.trash { width: 82px; height: 108px; margin: -9px 0 0 15px; }
.dots i { position: absolute; top: 132px; width: 8px; height: 8px; border-radius: 50%; background: #c99fe6; }
```
